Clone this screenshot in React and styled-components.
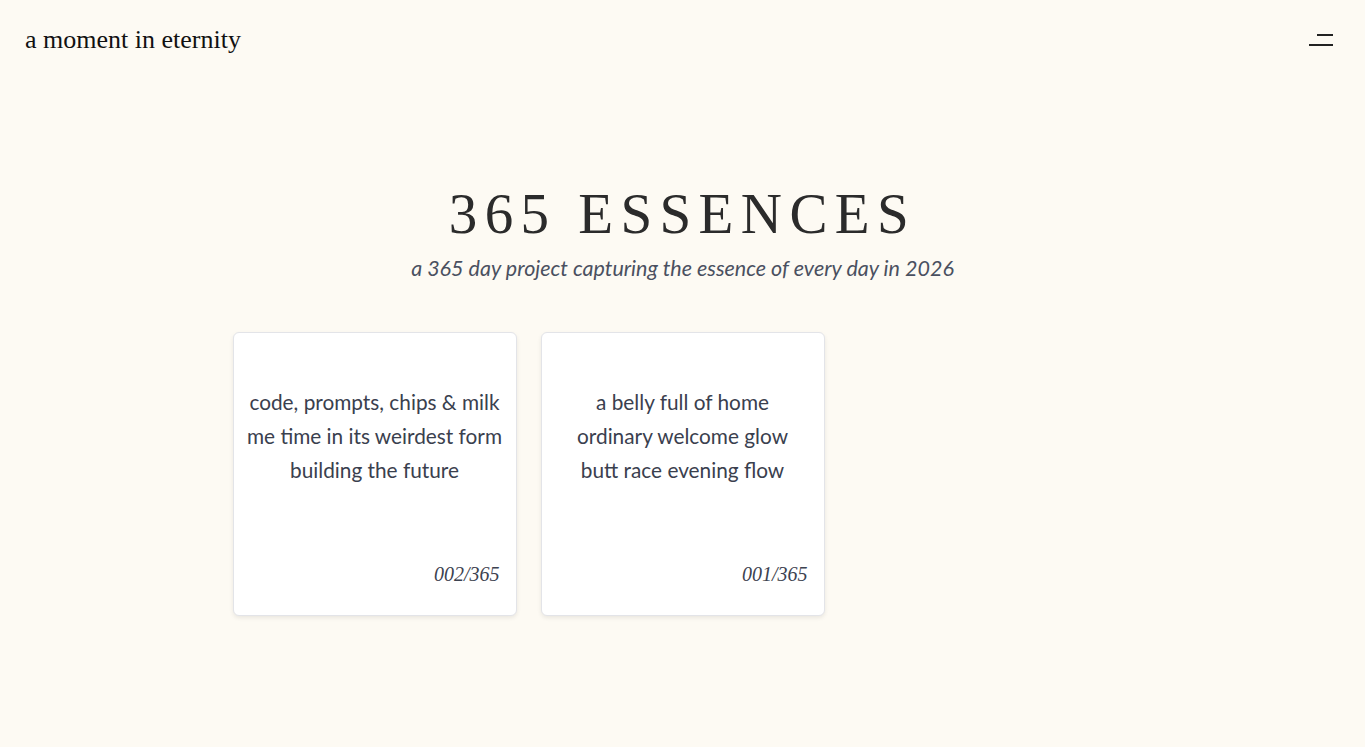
import React from "react";
import styled, { createGlobalStyle } from "styled-components";

const Global = createGlobalStyle`
  html, body { margin: 0; padding: 0; background: #fdfaf3; }
  body { font-family: "Lato", "Noto Sans", sans-serif; -webkit-font-smoothing: antialiased; }
  * { box-sizing: border-box; }
`;

const Page = styled.div`
  min-height: 747px;
  background: #fdfaf3;
  display: flex;
  flex-direction: column;
`;

const Header = styled.header`
  display: flex;
  align-items: center;
  justify-content: space-between;
  height: 80px;
  padding: 0 32px 0 25px;
`;

const Logo = styled.a`
  font-family: "Liberation Serif", "Times New Roman", serif;
  font-size: 26px;
  color: #111;
  text-decoration: none;
`;

const MenuButton = styled.button`
  width: 26px;
  height: 24px;
  padding: 0;
  border: 0;
  background: transparent;
  display: flex;
  flex-direction: column;
  align-items: flex-end;
  justify-content: center;
  gap: 8.5px;
  cursor: pointer;
`;

const MenuLine = styled.span`
  display: block;
  height: 1.5px;
  width: ${(p) => p.$w}px;
  background: #222;
`;

const Main = styled.main`
  display: flex;
  flex-direction: column;
  align-items: center;
  padding-top: 100px;
`;

const Title = styled.h1`
  margin: 0;
  font-family: "Liberation Serif", "Times New Roman", serif;
  font-weight: 400;
  font-size: 57px;
  letter-spacing: 0.13em;
  line-height: 68px;
  color: #2b2b2b;
`;

const Subtitle = styled.p`
  margin: 6px 0 0;
  font-style: italic;
  font-size: 21.5px;
  color: #4a5060;
  line-height: 28px;
`;

const Grid = styled.section`
  width: 900px;
  display: grid;
  grid-template-columns: repeat(3, 1fr);
  gap: 24px;
  margin-top: 50px;
`;

const Card = styled.article`
  aspect-ratio: 1 / 1;
  background: #fff;
  border: 1px solid #e3e4e8;
  border-radius: 6px;
  box-shadow: 0 2px 4px rgba(0, 0, 0, 0.08);
  display: flex;
  flex-direction: column;
  padding: 52px 12px 27px;
`;

const Lines = styled.div`
  text-align: center;
  font-size: 20.8px;
  line-height: 34px;
  color: #3a404e;
`;

const Counter = styled.div`
  margin-top: auto;
  padding-right: 4px;
  text-align: right;
  font-family: "Liberation Serif", "Times New Roman", serif;
  font-style: italic;
  font-size: 20px;
  line-height: 28px;
  color: #3c4250;
`;

const entries = [
  { n: "002/365", lines: ["code, prompts, chips & milk", "me time in its weirdest form", "building the future"] },
  { n: "001/365", lines: ["a belly full of home", "ordinary welcome glow", "butt race evening flow"] },
];

export default function App() {
  return (
    <Page>
      <Global />
      <Header>
        <Logo href="#">a moment in eternity</Logo>
        <MenuButton aria-label="menu">
          <MenuLine $w={16} />
          <MenuLine $w={24} />
        </MenuButton>
      </Header>
      <Main>
        <Title>365 ESSENCES</Title>
        <Subtitle>a 365 day project capturing the essence of every day in 2026</Subtitle>
        <Grid>
          {entries.map((e) => (
            <Card key={e.n}>
              <Lines>
                {e.lines.map((l) => (
                  <div key={l}>{l}</div>
                ))}
              </Lines>
              <Counter>{e.n}</Counter>
            </Card>
          ))}
        </Grid>
      </Main>
    </Page>
  );
}
